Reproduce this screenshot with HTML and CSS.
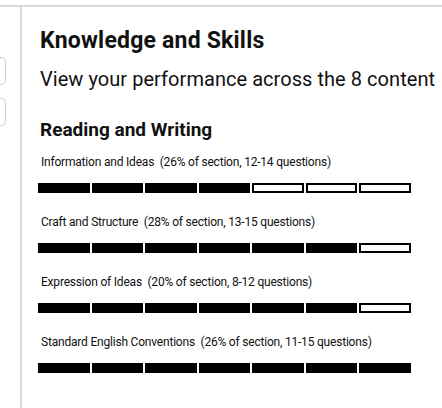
FILE: index.html
```html
<!DOCTYPE html>
<html lang="en">
<head>
	<meta charset="UTF-8">
	<title>Knowledge and Skills</title>
	<link rel="stylesheet" href="styles.css">
</head>
<body>
	<div class="topline"></div>
	<div class="page">
		<div class="side">
			<div class="tab"></div>
			<div class="tab"></div>
		</div>
		<div class="main">
			<h1>Knowledge and Skills</h1>
			<p class="intro">View your performance across the 8 content</p>
			<h2>Reading and Writing</h2>

			<div class="skill">
				<div class="label">Information and Ideas&nbsp; (26% of section, 12-14 questions)</div>
				<div class="bar">
					<span class="on"></span><span class="on"></span><span class="on"></span><span class="on"></span><span></span><span></span><span></span>
				</div>
			</div>
			<div class="skill">
				<div class="label">Craft and Structure&nbsp; (28% of section, 13-15 questions)</div>
				<div class="bar">
					<span class="on"></span><span class="on"></span><span class="on"></span><span class="on"></span><span class="on"></span><span class="on"></span><span></span>
				</div>
			</div>
			<div class="skill">
				<div class="label">Expression of Ideas&nbsp; (20% of section, 8-12 questions)</div>
				<div class="bar">
					<span class="on"></span><span class="on"></span><span class="on"></span><span class="on"></span><span class="on"></span><span class="on"></span><span></span>
				</div>
			</div>
			<div class="skill">
				<div class="label">Standard English Conventions&nbsp; (26% of section, 11-15 questions)</div>
				<div class="bar">
					<span class="on"></span><span class="on"></span><span class="on"></span><span class="on"></span><span class="on"></span><span class="on"></span><span class="on"></span>
				</div>
			</div>
		</div>
	</div>
</body>
</html>
```

FILE: styles.css
```css
* {
	margin: 0;
	padding: 0;
	box-sizing: border-box;
}
html, body {
	height: 100%;
	overflow: hidden;
}
body {
	background: #fff;
	font-family: Roboto, "Liberation Sans", sans-serif;
	color: #111;
}
.topline {
	height: 7px;
	border-bottom: 2px solid #d9d9d9;
}
.page {
	display: flex;
	height: 401px;
}
.side {
	width: 22px;
	flex-shrink: 0;
	border-right: 2px solid #d9d9d9;
	padding-top: 50px;
}
.tab {
	width: 6px;
	height: 28px;
	margin-bottom: 13px;
	border: 1px solid #cfcfcf;
	border-left: none;
	border-radius: 0 5px 5px 0;
}
.main {
	padding: 21px 0 0 18px;
	white-space: nowrap;
	overflow: hidden;
}
h1 {
	font-size: 23px;
	font-weight: bold;
	line-height: 26px;
	letter-spacing: 0.2px;
}
.intro {
	font-size: 20px;
	line-height: 24px;
	letter-spacing: 0.05px;
	margin-top: 13px;
}
h2 {
	font-size: 19px;
	font-weight: bold;
	line-height: 22px;
	margin-top: 28px;
}
.skill {
	margin-top: 13px;
}
.skill + .skill {
	margin-top: 21px;
}
.label {
	font-size: 12px;
	line-height: 16px;
	letter-spacing: -0.2px;
	padding-left: 1px;
}
.bar {
	display: flex;
	gap: 2px;
	margin-top: 13px;
	width: 373px;
	margin-left: -2px;
}
.bar span {
	flex: 1;
	height: 10px;
	border: 2px solid #000;
	background: #fff;
}
.bar span.on {
	background: #000;
}
```
